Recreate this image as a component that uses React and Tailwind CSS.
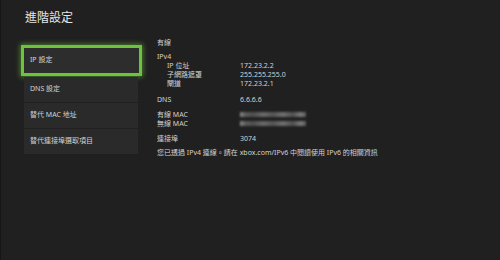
import React from 'react';

const menu = ['IP 設定', 'DNS 設定', '替代 MAC 地址', '替代連接埠選取項目'];

const font = { fontFamily: '"Segoe UI", "Noto Sans", "Noto Sans CJK TC", sans-serif' };

// Blurred-out MAC value
const Blurred = () => (
  <div className="flex h-[9px] items-center">
    <div className="h-[5px] w-[66px] bg-[linear-gradient(90deg,#8a8a8a_0%,#5c5c5c_8%,#4e4e4e_20%,#6a6a6a_35%,#555_50%,#707070_65%,#505050_80%,#7a7a7a_92%,#5a5a5a_100%)] blur-[1px]" />
  </div>
);

const Row = ({ label, value, children, indent }) => (
  <div className="flex h-[9px] items-center">
    <div className={indent ? 'w-[83px] pl-[10px]' : 'w-[83px]'}>{label}</div>
    {children || <div>{value}</div>}
  </div>
);

export default function App() {
  return (
    <div
      className="h-[260px] w-[500px] overflow-hidden border-l border-[#161616] bg-[#202020] text-[#d2d2d2]"
      style={font}
    >
      <div className="pl-[24px] pt-[9px] text-[12px] leading-[18px] text-[#e6e6e6]">進階設定</div>

      <div className="mt-[18px] flex">
        {/* menu */}
        <div className="ml-[23px] flex w-[114px] flex-col gap-[1px]">
          {menu.map((m, i) =>
            i === 0 ? (
              <div
                key={m}
                className="-ml-[3px] -mr-[4px] flex h-[31px] items-center border-[3px] border-[#6cc33c] bg-[#2d2d2d] pl-[6px] text-[7px] text-[#d8d8d8] shadow-[0_0_5px_1px_rgba(108,195,60,0.55)]"
              >
                {m}
              </div>
            ) : (
              <div key={m} className="flex h-[25px] items-center bg-[#2a2a2a] pl-[6px] text-[7px]">
                {m}
              </div>
            )
          )}
        </div>

        {/* details */}
        <div className="-mt-[7px] ml-[19px] flex flex-col text-[7px] leading-[9px]">
          <div className="h-[9px]">有線</div>
          <div className="mt-[5px] h-[9px]">IPv4</div>
          <Row indent label="IP 位址" value="172.23.2.2" />
          <Row indent label="子網路遮罩" value="255.255.255.0" />
          <Row indent label="閘道" value="172.23.2.1" />
          <div className="mt-[7px]">
            <Row label="DNS" value="6.6.6.6" />
          </div>
          <div className="mt-[6px]">
            <Row label="有線 MAC">
              <Blurred />
            </Row>
            <Row label="無線 MAC">
              <Blurred />
            </Row>
          </div>
          <div className="mt-[6px]">
            <Row label="連接埠" value="3074" />
          </div>
          <div className="mt-[5px] h-[9px] whitespace-nowrap">
            您已透過 IPv4 連線。請在 xbox.com/IPv6 中閱讀使用 IPv6 的相關資訊
          </div>
        </div>
      </div>
    </div>
  );
}
